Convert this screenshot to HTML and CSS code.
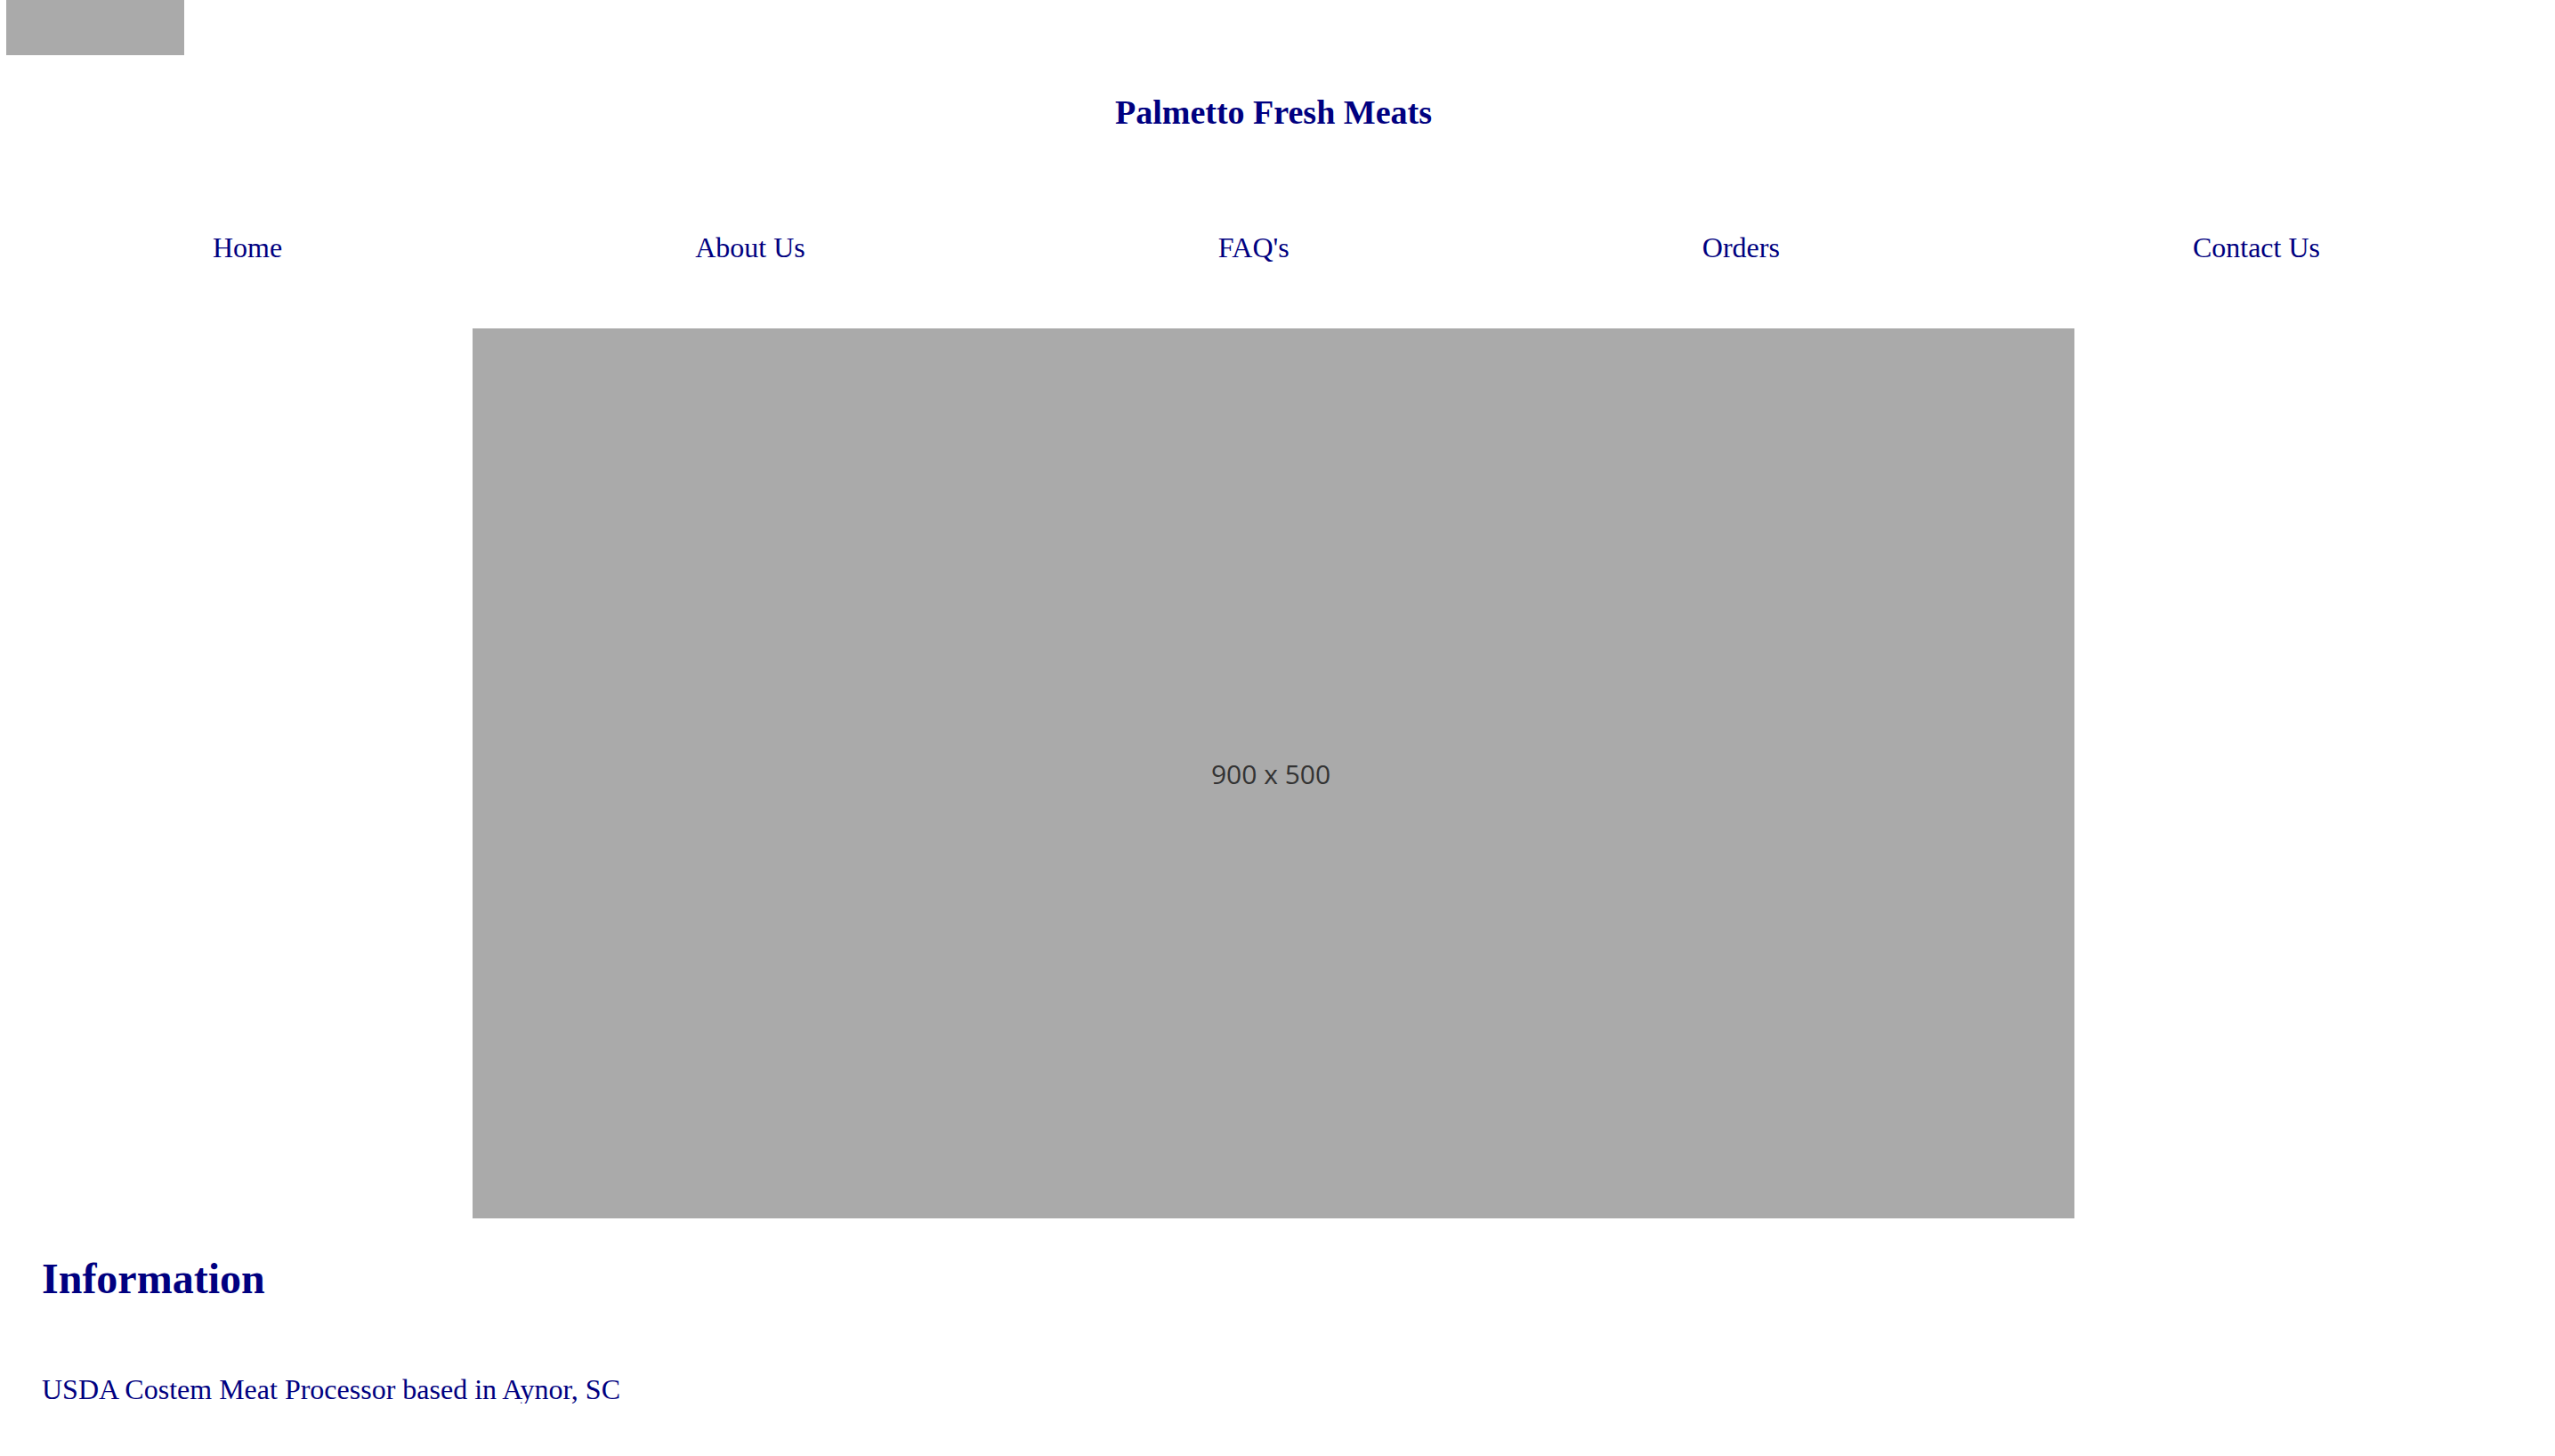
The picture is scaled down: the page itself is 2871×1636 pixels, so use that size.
FILE: index.html
```html
<!DOCTYPE html>
<html lang="en">
<head>
<meta charset="utf-8">
<title>Palmetto Fresh Meats</title>
<link rel="stylesheet" href="styles.css">
</head>
<body>
<header class="site-header">
  <div class="logo" role="img" aria-label="logo"></div>
  <h1 class="site-title">Palmetto Fresh Meats</h1>
  <nav class="site-nav">
    <ul class="nav-list">
      <li><a href="#">Home</a></li>
      <li><a href="#">About Us</a></li>
      <li><a href="#">FAQ's</a></li>
      <li><a href="#">Orders</a></li>
      <li><a href="#">Contact Us</a></li>
    </ul>
  </nav>
</header>
<main>
  <div class="hero"><span class="hero-label">900 x 500</span></div>
  <section class="info">
    <h2 class="info-title">Information</h2>
    <p class="info-text">USDA Costem Meat Processor based in Aynor, SC</p>
  </section>
</main>
</body>
</html>
```

FILE: styles.css
```css
html, body {
  background: #ffffff;
}
body {
  margin: 0;
  padding: 0 9px 0 0;
  font-family: "Liberation Serif", "Times New Roman", serif;
  font-size: 32px;
  color: #000080;
}
.logo {
  width: 200px;
  height: 62px;
  margin-left: 7px;
  background: #aaaaaa;
}
.site-title {
  margin: 45px 0 0;
  font-size: 38px;
  line-height: 38px;
  font-weight: bold;
  text-align: center;
}
.nav-list {
  list-style: none;
  margin: 117px 0 0;
  padding: 0 255px 0 239px;
  display: flex;
  justify-content: space-between;
  line-height: 32px;
}
.nav-list a {
  color: #000080;
  text-decoration: none;
}
.hero {
  width: 1800px;
  height: 1000px;
  margin: 75px auto 0;
  background: #aaaaaa;
  display: flex;
  align-items: center;
  justify-content: center;
}
.hero-label {
  font-family: "Open Sans", "DejaVu Sans", sans-serif;
  font-size: 30px;
  color: #333333;
  margin-right: 6px;
}
.info {
  padding-left: 47px;
}
.info-title {
  margin: 44px 0 0;
  font-size: 48px;
  line-height: 48px;
  font-weight: bold;
}
.info-text {
  margin: 84px 0 0;
  line-height: 32px;
}
```
